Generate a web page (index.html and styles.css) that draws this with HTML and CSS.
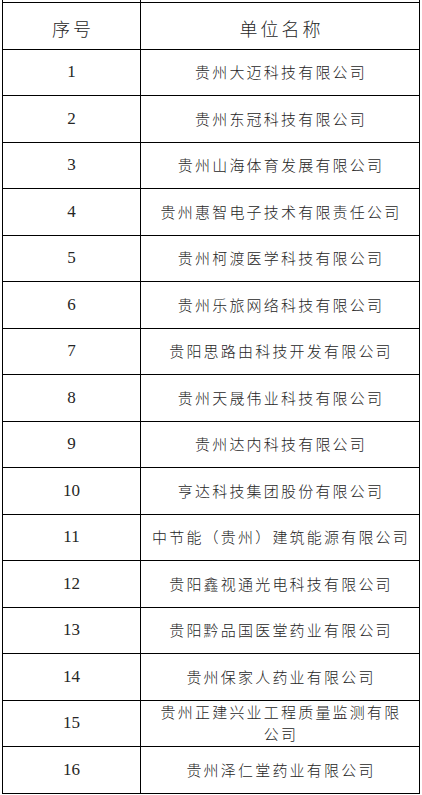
FILE: index.html
```html
<!DOCTYPE html>
<html lang="zh-CN">
<head>
<meta charset="utf-8">
<title>单位名称</title>
<link rel="stylesheet" href="styles.css">
</head>
<body>
<div class="sheet">
  <div class="cell stub"></div>
  <div class="cell stub"></div>

  <div class="cell head">序号</div>
  <div class="cell head">单位名称</div>

  <div class="cell num">1</div>
  <div class="cell name">贵州大迈科技有限公司</div>

  <div class="cell num">2</div>
  <div class="cell name">贵州东冠科技有限公司</div>

  <div class="cell num">3</div>
  <div class="cell name">贵州山海体育发展有限公司</div>

  <div class="cell num">4</div>
  <div class="cell name">贵州惠智电子技术有限责任公司</div>

  <div class="cell num">5</div>
  <div class="cell name">贵州柯渡医学科技有限公司</div>

  <div class="cell num">6</div>
  <div class="cell name">贵州乐旅网络科技有限公司</div>

  <div class="cell num">7</div>
  <div class="cell name">贵阳思路由科技开发有限公司</div>

  <div class="cell num">8</div>
  <div class="cell name">贵州天晟伟业科技有限公司</div>

  <div class="cell num">9</div>
  <div class="cell name">贵州达内科技有限公司</div>

  <div class="cell num">10</div>
  <div class="cell name">亨达科技集团股份有限公司</div>

  <div class="cell num">11</div>
  <div class="cell name">中节能（贵州）建筑能源有限公司</div>

  <div class="cell num">12</div>
  <div class="cell name">贵阳鑫视通光电科技有限公司</div>

  <div class="cell num">13</div>
  <div class="cell name">贵阳黔品国医堂药业有限公司</div>

  <div class="cell num">14</div>
  <div class="cell name">贵州保家人药业有限公司</div>

  <div class="cell num">15</div>
  <div class="cell name two">贵州正建兴业工程质量监测有限<br>公司</div>

  <div class="cell num">16</div>
  <div class="cell name">贵州泽仁堂药业有限公司</div>
</div>
</body>
</html>
```

FILE: styles.css
```css
html, body {
  margin: 0;
  padding: 0;
  background: #ffffff;
}

body {
  width: 422px;
  height: 795px;
  overflow: hidden;
}

.sheet {
  margin-left: 2px;
  width: 418px;
  box-sizing: border-box;
  border-left: 1px solid #000;
  display: grid;
  grid-template-columns: 138px 279px;
  grid-template-rows: 3px;
  grid-auto-rows: 46.5px;
  color: #262626;
}

.cell {
  box-sizing: border-box;
  border-right: 1px solid #000;
  border-bottom: 1px solid #000;
  display: flex;
  align-items: center;
  justify-content: center;
  text-align: center;
}

.stub {
  height: 3px;
}

.head {
  font-family: "Noto Sans CJK SC", sans-serif;
  font-weight: 300;
  font-size: 18px;
  letter-spacing: 3px;
  padding-top: 4px;
  padding-left: 3px;
}

.num {
  font-family: "Liberation Serif", serif;
  font-size: 17px;
}

.name {
  font-family: "Noto Sans CJK SC", sans-serif;
  font-weight: 300;
  font-size: 15px;
  letter-spacing: 2.2px;
  padding: 0 8px 0 10px;
  line-height: 22px;
}
```
